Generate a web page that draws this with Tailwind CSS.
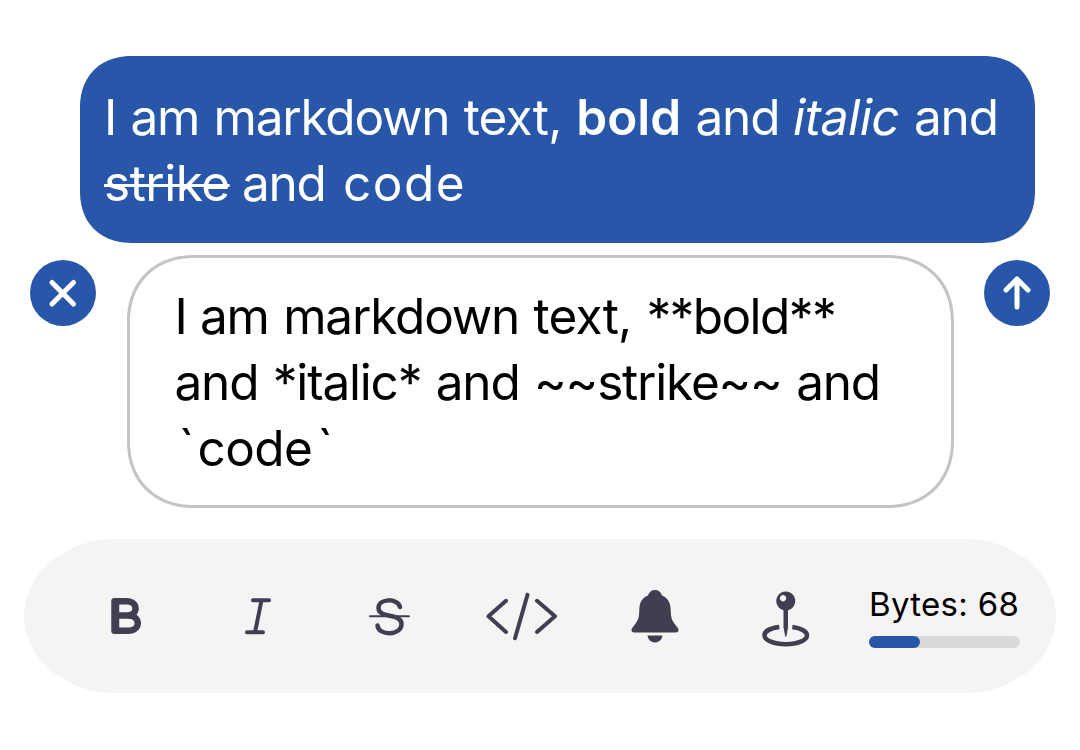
<!DOCTYPE html>
<html lang="en">
<head>
  <meta charset="UTF-8">
  <meta name="viewport" content="width=device-width, initial-scale=1.0">
  <title>Markdown Composer</title>
  <script src="https://cdn.jsdelivr.net/npm/@tailwindcss/browser@4"></script>
</head>
<body class="bg-white w-[1080px] h-[750px] overflow-hidden pt-14 flex flex-col font-[Inter,sans-serif]">

  <!-- Preview bubble -->
  <div class="ml-20 w-[955px] h-[187px] shrink-0 bg-[#2856a8] text-white rounded-[52px] [corner-shape:superellipse(1.15)] pl-[24px] pt-[28px] text-[49.5px] leading-[66px] tracking-[-1.2px] [word-spacing:1.6px] whitespace-nowrap">
    <p>I am markdown <span class="tracking-[-0.8px]">text, </span><strong class="font-semibold tracking-[0px]">bold</strong> and <em class="inline-block not-italic -skew-x-[10deg] tracking-[-0.4px]">italic</em> and</p>
    <p><s class="decoration-[3px] tracking-[-0.5px]">strike</s><span class="-ml-[2px]"> and</span> <code class="font-[Inter,sans-serif] tracking-[1.5px] ml-[3px]">code</code></p>
  </div>

  <!-- Input row -->
  <div class="mt-3 pl-[30px] pr-[30px] flex justify-between items-start shrink-0">
    <button class="mt-[5px] size-[66px] rounded-full bg-[#2856a8] flex items-center justify-center">
      <svg class="size-[66px]" viewBox="0 0 66 66" fill="none" stroke="#fff" stroke-width="5" stroke-linecap="round">
        <path d="M22 22.5L43.500 44M43.500 22.500L22 44"/>
      </svg>
    </button>
    <div class="w-[827px] h-[253px] border-3 border-[#c4c4c4] rounded-[67px] [corner-shape:superellipse(1.12)] pl-[45px] pt-[25px] text-black text-[49.5px] leading-[66px] tracking-[-1.2px] [word-spacing:1.8px] whitespace-nowrap">
      <p><span class="tracking-[-1.8px]">I </span>am markdown <span class="tracking-[-0.8px]">text, </span><span class="tracking-[-1.6px]">**bold**</span></p>
      <p>and *italic* and ~~strike~~ and</p>
      <p class="pl-[4px] tracking-[-0.6px]"><span class="tracking-[3px]">`</span>code<span class="ml-[5px]">`</span></p>
    </div>
    <button class="mt-[5px] size-[66px] rounded-full bg-[#2856a8] flex items-center justify-center">
      <svg class="size-[66px]" viewBox="0 0 66 66" fill="none" stroke="#fff" stroke-width="5" stroke-linecap="round" stroke-linejoin="round">
        <path d="M33 47V20M22 30L33 19L44 30"/>
      </svg>
    </button>
  </div>

  <!-- Format toolbar -->
  <div class="mt-[31px] mx-6 h-[154px] shrink-0 bg-[#f4f4f5] rounded-[92px/77px] pl-[65px] pr-9 flex items-center text-[#403f52]">
    <div class="flex w-[780px] h-20">
      <svg class="w-[132px] h-20" viewBox="0 0 132 80" fill="none" stroke="currentColor" stroke-width="6.500" stroke-linejoin="round">
        <path d="M25.500 39.500V25.300H37.500C49.500 25.300 49.500 39.500 37.500 39.500H25.500V54.800H39C52 54.800 52 39.500 39 39.500H25.500Z"/>
        <path d="M27 27V53"/>
      </svg>
      <svg class="w-[132px] h-20" viewBox="0 0 132 80" fill="none" stroke="currentColor" stroke-width="4" stroke-linecap="round">
        <path d="M32 24.300H48M26 56.300H42M40.500 24.300L34 56.300"/>
      </svg>
      <svg class="w-[132px] h-20" viewBox="0 0 132 80" fill="none" stroke="currentColor" stroke-width="4.500" stroke-linecap="round">
        <path d="M47 31C45 22 25.500 22 25.500 32C25.500 43 48.500 36.500 48.500 48C48.500 60 25.500 60 24.500 49.500"/>
        <path d="M17 40.300H56" stroke-width="2"/>
      </svg>
      <svg class="w-[132px] h-20" viewBox="0 0 132 80" fill="none" stroke="currentColor" stroke-width="4" stroke-linecap="round" stroke-linejoin="round">
        <path d="M21 24.800L3.500 40.300L21 56M52 24.800L70 40.300L52 56M42.500 18.800L30 62.300"/>
      </svg>
      <svg class="w-[132px] h-20" viewBox="0 0 132 80" fill="currentColor">
        <path d="M38 14C34.500 14 32 16 31 19.500C25 22 22.300 27 22.300 33.500C22.200 41.500 21.500 44 17.500 49C15.500 51.500 14.500 52.500 14.500 54C14.500 55.800 15.800 56.500 17.500 56.500H58.500C60.300 56.500 61.500 55.800 61.500 54C61.500 52.500 60.500 51.500 58.500 49C54.500 44 54 41.500 53.700 33.500C53.500 27 51 22 45 19.500C44 16 41.500 14 38 14Z"/>
        <path d="M30.500 59.500H45.500C45 63.500 42 66.500 38 66.500C34 66.500 31 63.500 30.500 59.500Z"/>
      </svg>
      <svg class="w-[120px] h-20" viewBox="0 0 120 80" fill="currentColor">
        <path fill-rule="evenodd" d="M36.800 15.500A9.500 9.500 0 1 1 36.700 15.500ZM34 19A3.200 3.200 0 1 0 34.100 19Z"/>
        <path d="M34.500 33.500H39V51.500L37.600 59.500Q36.800 62 36 59.500L34.500 51.500Z"/>
        <path d="M30.300 51C22 52 15.500 55 15.500 59.200C15.500 64.500 25 68.200 36.800 68.200C48.500 68.200 58 64.500 58 59.200C58 55 51.500 52 43.300 51" fill="none" stroke="currentColor" stroke-width="4.500"/>
      </svg>
    </div>
    <div class="w-[151px]">
      <p class="text-black text-[33px] leading-10 tracking-[0.3px] whitespace-nowrap">Bytes: 68</p>
      <div class="mt-3 h-3 rounded-full bg-[#dadadb]">
        <div class="h-3 rounded-full bg-[#2856a8]" style="width: 34%"></div>
      </div>
    </div>
  </div>

</body>
</html>
